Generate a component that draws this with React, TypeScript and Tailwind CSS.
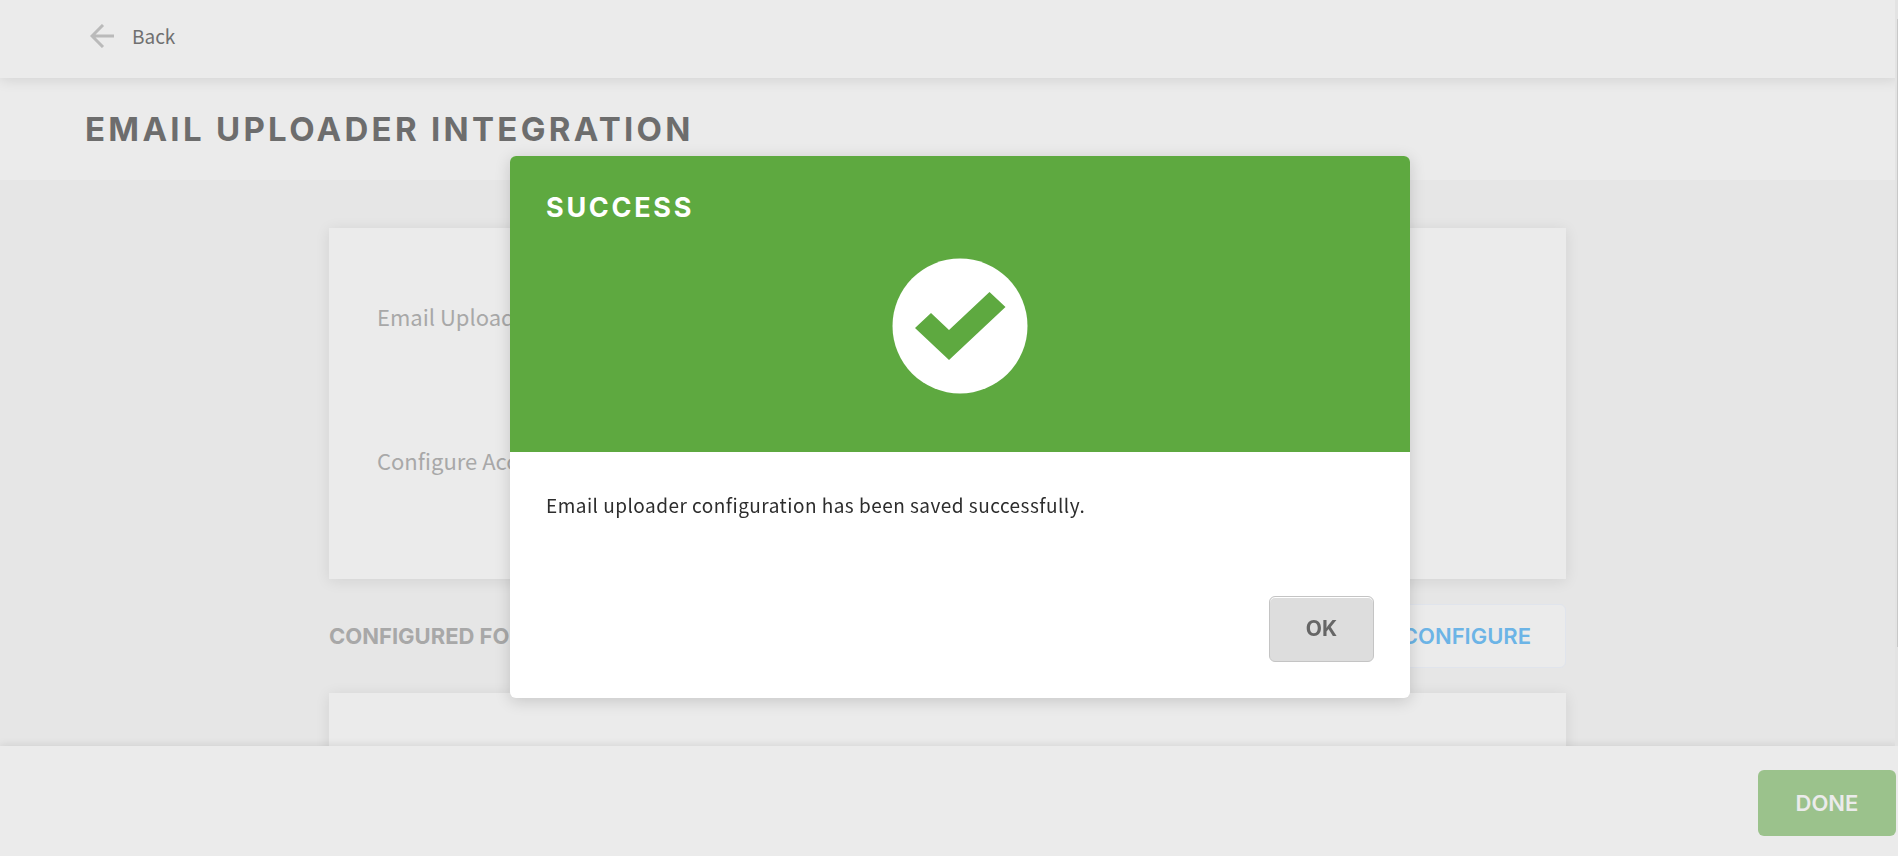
function TopBar() {
  return (
    <header className="relative z-10 h-[78px] shrink-0 bg-[#ebebeb] pl-[90px] pt-4 shadow-[0_1px_14px_rgba(0,0,0,0.12)]">
      <a href="#back" className="inline-flex items-center gap-[18px] text-[19px] leading-10 text-[#707070]">
        <svg width="24" height="24" viewBox="0 0 24 24" fill="none" stroke="#bababa" strokeWidth="3" aria-hidden="true">
          <path d="M24 12H2.5M13 1L2 12l11 11" />
        </svg>
        Back
      </a>
    </header>
  );
}

function SuccessDialog() {
  return (
    <div className="fixed inset-0 z-30 flex items-start justify-center pl-[22px] pt-[156px]">
      <section
        role="dialog"
        aria-modal="true"
        aria-labelledby="dialog-title"
        className="w-full max-w-[900px] overflow-hidden rounded-md bg-white shadow-[0_3px_16px_rgba(0,0,0,0.16)]"
      >
        <div className="flex h-[296px] flex-col bg-[#5ea940] px-9 pt-8">
          <h2 id="dialog-title" className="font-[Inter,sans-serif] text-[27px] font-bold leading-10 tracking-widest text-white">
            SUCCESS
          </h2>
          <svg className="mt-[30px] self-center" width="136" height="136" viewBox="0 0 136 136" aria-hidden="true">
            <circle cx="68" cy="68" r="67.5" fill="#fff" />
            <path d="M23 70L39 55l18 17L97.500 34 113.500 49 57 102z" fill="#5ea940" />
          </svg>
        </div>
        <div className="flex flex-col px-9 pb-9 pt-[35px]">
          <p className="text-[19px] leading-9 tracking-wide text-[#2d2d2d]">
            Email uploader configuration has been saved successfully.
          </p>
          <button
            type="button"
            className="mt-[73px] h-[66px] w-[105px] self-end rounded-md border border-[#c4c4c4] bg-[#dddddd] font-[Inter,sans-serif] text-[21px] font-bold text-[#666666] shadow-[inset_0_1px_0_#ffffff]"
          >
            OK
          </button>
        </div>
      </section>
    </div>
  );
}

export default function App() {
  return (
    <div className='relative flex h-screen flex-col overflow-hidden bg-[#e6e6e6] font-["Noto_Sans_CJK_SC",sans-serif]'>
      <TopBar />
      <div className="flex h-[102px] shrink-0 items-center bg-[#ebebeb] pl-[85px]">
        <h1 className="font-[Inter,sans-serif] text-[33px] font-bold leading-10 tracking-widest text-[#6d6d6d]">
          EMAIL UPLOADER INTEGRATION
        </h1>
      </div>

      <main className="min-h-0 flex-1 overflow-hidden pl-[329px] pr-[332px] pt-12">
        <section className="flex h-[351px] flex-col bg-[#ebebeb] px-12 pt-[68px] text-[22px] leading-10 text-[#a8a8a8] shadow-[0_2px_14px_rgba(0,0,0,0.09)]">
          <p>Email Uploader</p>
          <p className="mt-[104px]">Configure Account</p>
        </section>

        <div className="flex items-center justify-between py-[25px]">
          <h2 className="font-[Inter,sans-serif] text-[22px] font-bold text-[#a8a8a8]">CONFIGURED FOR</h2>
          <button
            type="button"
            className="h-16 rounded-md border border-[#e0e4ec] bg-[#ebebeb] px-[34px] font-[Inter,sans-serif] text-[22px] font-semibold text-[#6cb4e6]"
          >
            CONFIGURE
          </button>
        </div>

        <section className="h-[340px] bg-[#ebebeb] shadow-[0_2px_14px_rgba(0,0,0,0.09)]" />
      </main>

      <footer className="relative z-10 flex h-[110px] shrink-0 items-start justify-end bg-[#ebebeb] pr-[2px] pt-6 shadow-[0_-1px_8px_rgba(0,0,0,0.10)]">
        <button
          type="button"
          className="h-[66px] w-[138px] rounded-md bg-[#9bc28c] font-[Inter,sans-serif] text-[22px] font-semibold text-[#ebebeb]"
        >
          DONE
        </button>
      </footer>

      <div className="absolute bottom-[110px] right-0 top-0 z-20 w-[3px] bg-[#e3e3e3] pt-[19px]" aria-hidden="true">
        <div className="ml-auto h-[628px] w-px bg-[#c8c8c8]" />
      </div>
      <SuccessDialog />
    </div>
  );
}
